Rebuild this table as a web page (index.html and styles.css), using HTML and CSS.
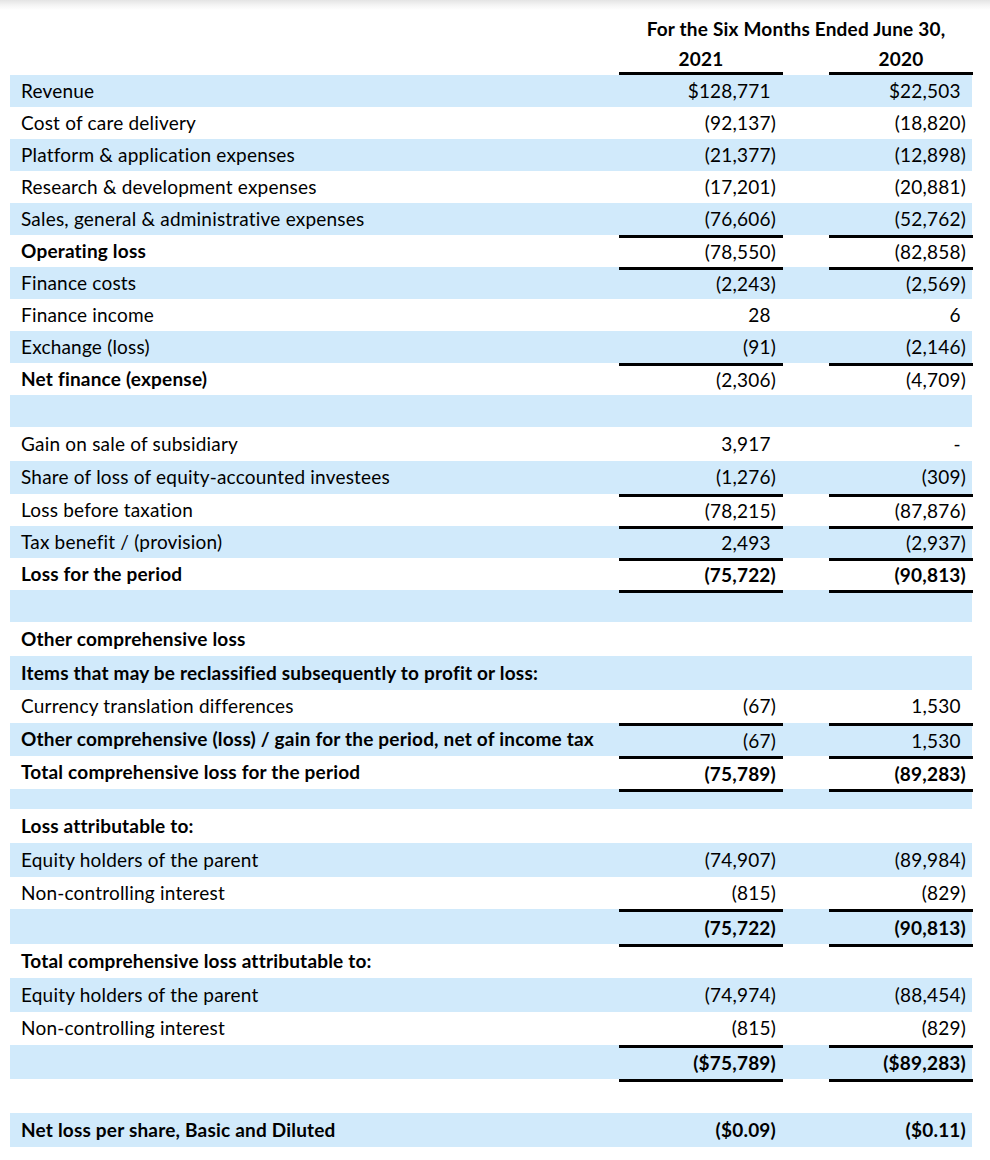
FILE: index.html
```html
<!DOCTYPE html>
<html lang="en">
<head>
<meta charset="utf-8">
<title>Statement of Comprehensive Loss</title>
<link rel="stylesheet" href="styles.css">
</head>
<body>
<div class="shade"></div>
<div class="sheet">
  <div class="row head1"><div class="lab"></div><div class="span3 b">For the Six Months Ended June 30,</div></div>
  <div class="row head2"><div class="lab"></div><div class="v1 ctr b ul">2021</div><div class="sp"></div><div class="v2 ctr b ul">2020</div></div>

  <div class="row blue"><div class="lab">Revenue</div><div class="v1"><span class="p">$128,771</span></div><div class="sp"></div><div class="v2"><span class="p">$22,503</span></div></div>
  <div class="row"><div class="lab">Cost of care delivery</div><div class="v1">(92,137)</div><div class="sp"></div><div class="v2">(18,820)</div></div>
  <div class="row blue"><div class="lab">Platform &amp; application expenses</div><div class="v1">(21,377)</div><div class="sp"></div><div class="v2">(12,898)</div></div>
  <div class="row"><div class="lab">Research &amp; development expenses</div><div class="v1">(17,201)</div><div class="sp"></div><div class="v2">(20,881)</div></div>
  <div class="row blue"><div class="lab">Sales, general &amp; administrative expenses</div><div class="v1">(76,606)</div><div class="sp"></div><div class="v2">(52,762)</div></div>
  <div class="row"><div class="lab b">Operating loss</div><div class="v1 rule">(78,550)</div><div class="sp"></div><div class="v2 rule">(82,858)</div></div>
  <div class="row blue"><div class="lab">Finance costs</div><div class="v1 rule">(2,243)</div><div class="sp"></div><div class="v2 rule">(2,569)</div></div>
  <div class="row"><div class="lab">Finance income</div><div class="v1"><span class="p">28</span></div><div class="sp"></div><div class="v2"><span class="p">6</span></div></div>
  <div class="row blue"><div class="lab">Exchange (loss)</div><div class="v1">(91)</div><div class="sp"></div><div class="v2">(2,146)</div></div>
  <div class="row"><div class="lab b">Net finance (expense)</div><div class="v1 rule">(2,306)</div><div class="sp"></div><div class="v2 rule">(4,709)</div></div>
  <div class="row blue"><div class="lab"></div><div class="v1"></div><div class="sp"></div><div class="v2"></div></div>

  <div class="row h34"><div class="lab">Gain on sale of subsidiary</div><div class="v1"><span class="p">3,917</span></div><div class="sp"></div><div class="v2"><span class="p">-</span></div></div>
  <div class="row blue h33"><div class="lab">Share of loss of equity-accounted investees</div><div class="v1">(1,276)</div><div class="sp"></div><div class="v2">(309)</div></div>
  <div class="row"><div class="lab">Loss before taxation</div><div class="v1 rule">(78,215)</div><div class="sp"></div><div class="v2 rule">(87,876)</div></div>
  <div class="row blue"><div class="lab">Tax benefit / (provision)</div><div class="v1 rule"><span class="p">2,493</span></div><div class="sp"></div><div class="v2 rule">(2,937)</div></div>
  <div class="row"><div class="lab b">Loss for the period</div><div class="v1 rule b">(75,722)</div><div class="sp"></div><div class="v2 rule b">(90,813)</div></div>
  <div class="row blue"><div class="lab"></div><div class="v1 rule"></div><div class="sp"></div><div class="v2 rule"></div></div>

  <div class="row h34"><div class="lab b">Other comprehensive loss</div><div class="v1"></div><div class="sp"></div><div class="v2"></div></div>
  <div class="row blue h34"><div class="lab b">Items that may be reclassified subsequently to profit or loss:</div><div class="v1"></div><div class="sp"></div><div class="v2"></div></div>
  <div class="row h33"><div class="lab">Currency translation differences</div><div class="v1">(67)</div><div class="sp"></div><div class="v2"><span class="p">1,530</span></div></div>
  <div class="row blue h33"><div class="lab b">Other comprehensive (loss) / gain for the period, net of income tax</div><div class="v1 rule">(67)</div><div class="sp"></div><div class="v2 rule"><span class="p">1,530</span></div></div>
  <div class="row h33"><div class="lab b">Total comprehensive loss for the period</div><div class="v1 rule b">(75,789)</div><div class="sp"></div><div class="v2 rule b">(89,283)</div></div>
  <div class="row blue h20"><div class="lab"></div><div class="v1 rule"></div><div class="sp"></div><div class="v2 rule"></div></div>

  <div class="row h34"><div class="lab b">Loss attributable to:</div><div class="v1"></div><div class="sp"></div><div class="v2"></div></div>
  <div class="row blue h34"><div class="lab">Equity holders of the parent</div><div class="v1">(74,907)</div><div class="sp"></div><div class="v2">(89,984)</div></div>
  <div class="row"><div class="lab">Non-controlling interest</div><div class="v1">(815)</div><div class="sp"></div><div class="v2">(829)</div></div>
  <div class="row blue h35"><div class="lab"></div><div class="v1 rule b">(75,722)</div><div class="sp"></div><div class="v2 rule b">(90,813)</div></div>

  <div class="row h34"><div class="lab b">Total comprehensive loss attributable to:</div><div class="v1 rule"></div><div class="sp"></div><div class="v2 rule"></div></div>
  <div class="row blue h34"><div class="lab">Equity holders of the parent</div><div class="v1">(74,974)</div><div class="sp"></div><div class="v2">(88,454)</div></div>
  <div class="row h33"><div class="lab">Non-controlling interest</div><div class="v1">(815)</div><div class="sp"></div><div class="v2">(829)</div></div>
  <div class="row blue h34"><div class="lab"></div><div class="v1 rule b">($75,789)</div><div class="sp"></div><div class="v2 rule b">($89,283)</div></div>
  <div class="row h34"><div class="lab"></div><div class="v1 rule"></div><div class="sp"></div><div class="v2 rule"></div></div>

  <div class="row blue h34"><div class="lab b">Net loss per share, Basic and Diluted</div><div class="v1 b">($0.09)</div><div class="sp"></div><div class="v2 b">($0.11)</div></div>
</div>
</body>
</html>
```
FILE: styles.css
```css
html, body {
  margin: 0;
  padding: 0;
  background: #ffffff;
}

body {
  font-family: "Lato", "Carlito", "Open Sans", sans-serif;
  font-size: 19px;
  letter-spacing: 0.2px;
  color: #000000;
}

.shade {
  height: 10px;
  background: linear-gradient(to bottom, #e4e4e4 0%, #f4f4f4 50%, #ffffff 100%);
}

.sheet {
  margin-left: 10px;
  width: 963px;
}

.row {
  display: grid;
  grid-template-columns: 609px 164px 46px 144px;
  height: 32px;
  box-sizing: border-box;
}

.row.h20 { height: 20px; }
.row.h33 { height: 33px; }
.row.h34 { height: 34px; }
.row.h35 { height: 35px; }

.row.blue .lab,
.row.blue .v1,
.row.blue .sp {
  background: #d1eafb;
}

.row.blue .v2 {
  background: linear-gradient(to right, #d1eafb calc(100% - 1px), #ffffff calc(100% - 1px));
}

.lab, .v1, .sp, .v2, .span3 {
  box-sizing: border-box;
  display: flex;
  align-items: center;
  white-space: nowrap;
  padding-bottom: 2px;
}

.lab {
  padding-left: 11px;
}

.v1, .v2 {
  justify-content: flex-end;
}

.v1 { padding-right: 7px; }
.v2 { padding-right: 7px; }

.b { font-weight: 700; }

.rule { border-top: 3px solid #000000; }

.head1 { height: 33px; }
.head1 .span3 {
  grid-column: 2 / 5;
  justify-content: center;
  padding-bottom: 0;
  padding-top: 3px;
}

.head2 { height: 32px; }
.head2 .ctr {
  justify-content: center;
  padding-right: 0;
  padding-bottom: 0;
  padding-top: 2px;
}
.head2 .ul { border-bottom: 3px solid #000000; }

.p::after {
  content: ")";
  visibility: hidden;
}
```
